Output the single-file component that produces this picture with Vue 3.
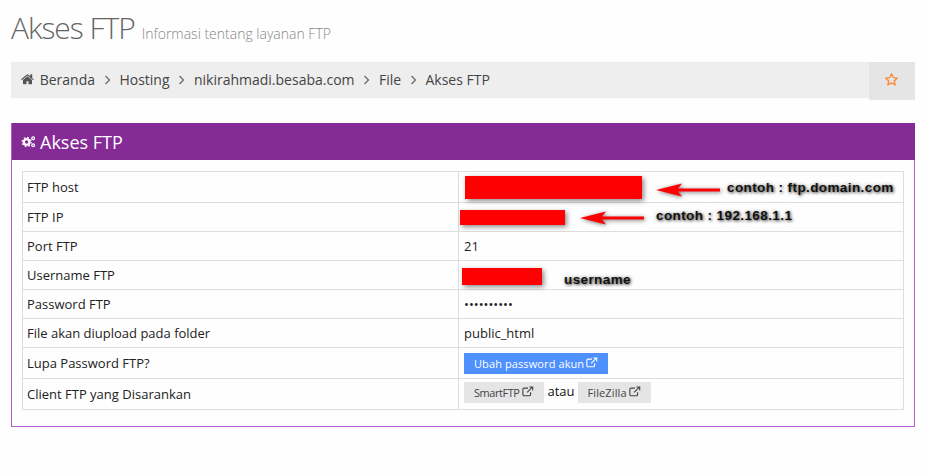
<script setup>
const rows = [
  { label: 'FTP host' },
  { label: 'FTP IP' },
  { label: 'Port FTP', value: '21' },
  { label: 'Username FTP' },
  { label: 'Password FTP', value: '••••••••••' },
  { label: 'File akan diupload pada folder', value: 'public_html' },
]
const crumbs = ['Hosting', 'nikirahmadi.besaba.com', 'File', 'Akses FTP']
</script>

<template>
  <div class="page">
    <header class="title">
      <h1>Akses FTP</h1>
      <small>Informasi tentang layanan FTP</small>
    </header>

    <div class="crumbbar">
      <nav class="crumbs">
        <svg class="home" viewBox="0 0 1664 1408" width="13" height="11"><path fill="#555" d="M1408 768v480q0 26-19 45t-45 19H960V928H704v384H320q-26 0-45-19t-19-45V768q0-1 .5-3t.5-3l575-474 575 474q1 2 1 6zm223-69-62 74q-8 9-21 11h-3q-13 0-21-7L832 200 140 777q-12 8-24 7-13-2-21-11l-62-74q-8-10-7-23.500t11-21.500L756 67q32-26 76-26t76 26l272 227V77q0-14 9-23t23-9h192q14 0 23 9t9 23v454l219 182q10 8 11 21.500t-7 23.500z"/></svg>
        <span>Beranda</span>
        <template v-for="c in crumbs" :key="c">
          <svg class="sep" viewBox="0 0 7 10" width="7" height="10"><path d="M1.500 1l4 4-4 4" fill="none" stroke="#666" stroke-width="1.200"/></svg>
          <span>{{ c }}</span>
        </template>
      </nav>
      <div class="star">
        <svg viewBox="0 0 24 24" width="15" height="15"><path d="M12 2.800l2.800 6.100 6.600.8-4.900 4.500 1.300 6.600-5.800-3.300-5.800 3.300 1.300-6.600-4.900-4.500 6.600-.8z" fill="none" stroke="#fb8a3a" stroke-width="2.200" stroke-linejoin="round"/></svg>
      </div>
    </div>

    <section class="panel">
      <div class="panel-head">
        <svg class="gears" viewBox="0 0 16 14" width="15" height="13">
          <g fill="none" stroke="#fff">
            <circle cx="6" cy="7.500" r="3" stroke-width="2.400"/>
            <circle cx="6" cy="7.500" r="4.800" stroke-width="1.500" stroke-dasharray="1.800 1.970"/>
            <circle cx="13" cy="3.500" r="1.500" stroke-width="1.300"/>
            <circle cx="13" cy="11" r="1.500" stroke-width="1.300"/>
          </g>
        </svg>
        <h2>Akses FTP</h2>
      </div>
      <div class="panel-body">
        <table>
          <tbody>
            <tr v-for="(r, i) in rows" :key="r.label" :class="{ first: i === 0 }">
              <td class="lab">{{ r.label }}</td>
              <td>{{ r.value }}</td>
            </tr>
            <tr class="btnrow">
              <td class="lab">Lupa Password FTP?</td>
              <td>
                <a class="btn blue">Ubah password akun
                  <svg viewBox="0 0 14 12" width="12" height="11"><path d="M10 7v2.500a1.500 1.500 0 0 1-1.500 1.500h-6A1.500 1.500 0 0 1 1 9.500v-6A1.500 1.500 0 0 1 2.500 2H7M6 7l6-6M8.500 .8h4v4" fill="none" stroke="currentColor" stroke-width="1.300"/></svg>
                </a>
              </td>
            </tr>
            <tr class="btnrow">
              <td class="lab">Client FTP yang Disarankan</td>
              <td class="clients">
                <a class="btn grey tight">SmartFTP
                  <svg viewBox="0 0 14 12" width="12" height="11"><path d="M10 7v2.500a1.500 1.500 0 0 1-1.500 1.500h-6A1.500 1.500 0 0 1 1 9.500v-6A1.500 1.500 0 0 1 2.500 2H7M6 7l6-6M8.500 .8h4v4" fill="none" stroke="currentColor" stroke-width="1.300"/></svg>
                </a>
                <span class="atau">atau</span>
                <a class="btn grey">FileZilla
                  <svg viewBox="0 0 14 12" width="12" height="11"><path d="M10 7v2.500a1.500 1.500 0 0 1-1.500 1.500h-6A1.500 1.500 0 0 1 1 9.500v-6A1.500 1.500 0 0 1 2.500 2H7M6 7l6-6M8.500 .8h4v4" fill="none" stroke="currentColor" stroke-width="1.300"/></svg>
                </a>
              </td>
            </tr>
          </tbody>
        </table>
      </div>
    </section>

    <!-- hand-drawn annotations pasted over the screenshot -->
    <div class="mark" style="left:465px;top:176px;width:177px;height:23px"></div>
    <div class="mark" style="left:460px;top:210px;width:105px;height:15px"></div>
    <div class="mark" style="left:462px;top:268px;width:80px;height:17px"></div>
    <svg class="arrow" style="left:654px;top:181px" width="68" height="18" viewBox="0 0 68 18"><path d="M2 9 28 2.500 24 7.500H66V10.500H24L28 15.500Z" fill="#f00"/></svg>
    <svg class="arrow" style="left:578px;top:209px" width="68" height="18" viewBox="0 0 68 18"><path d="M2 9 28 2.500 24 7.500H66V10.500H24L28 15.500Z" fill="#f00"/></svg>
    <span class="note" style="left:727px;top:180px">contoh : ftp.domain.com</span>
    <span class="note" style="left:656px;top:208px">contoh : 192.168.1.1</span>
    <span class="note" style="left:564px;top:272px">username</span>
  </div>
</template>

<style>
html, body { margin: 0; background: #fefefe; }
</style>

<style scoped>
.page {
  position: relative;
  width: 928px;
  height: 476px;
  box-sizing: border-box;
  padding: 0 13px 0 11px;
  overflow: hidden;
  font-family: "Open Sans", "Liberation Sans", sans-serif;
  color: #333;
}
.title {
  display: flex;
  align-items: baseline;
  height: 62px;
  padding-top: 7px;
  box-sizing: border-box;
}
.title h1 {
  margin: 0;
  font-size: 30px;
  line-height: 41px;
  font-weight: 300;
  color: #666;
  letter-spacing: -1.05px;
}
.title small {
  margin-left: 7px;
  font-size: 14px;
  font-weight: 300;
  color: #888;
}
.crumbbar {
  display: flex;
  align-items: flex-start;
  height: 38px;
}
.crumbs {
  flex: 1;
  height: 36px;
  display: flex;
  align-items: center;
  gap: 8.700px;
  padding-left: 10px;
  padding-bottom: 2px;
  box-sizing: border-box;
  background: #eee;
  font-size: 14px;
  color: #444;
}
.crumbs .home { margin-right: -3px; }
.crumbs .sep { margin-top: 2px; }
.star {
  width: 46px;
  height: 38px;
  padding-bottom: 3px;
  box-sizing: border-box;
  display: flex;
  align-items: center;
  justify-content: flex-start;
  padding-left: 15px;
  background: #e5e5e5;
}
.panel {
  margin-top: 23px;
  height: 304px;
  box-sizing: border-box;
  border: 1px solid #b45fc9;
}
.panel-head {
  height: 37px;
  margin: -1px -1px 0 0;
  padding-left: 9px;
  display: flex;
  align-items: center;
  gap: 4px;
  background: #842b96;
  color: #fff;
}
.panel-head h2 {
  margin: 0;
  font-size: 18px;
  font-weight: 400;
}
.panel-body { padding: 11px 10px; }
table {
  width: 882px;
  border-collapse: collapse;
  font-size: 13px;
  color: #222;
  table-layout: fixed;
}
td {
  height: 28px;
  padding: 0 5px;
  border: 1px solid #ddd;
  box-sizing: content-box;
  vertical-align: middle;
  line-height: 17px;
}
.first td { height: 30px; }
.lab { width: 426px; padding-left: 4px; }
.btnrow td { height: 30px; }
.btnrow td.lab { padding-left: 4px; }
.btn {
  display: inline-flex;
  align-items: center;
  gap: 2px;
  height: 21px;
  padding: 0 10px;
  font-size: 11px;
  letter-spacing: .1px;
  white-space: nowrap;
}
.btn svg { margin-top: -2px; }
.blue { background: #4d90fe; color: #fff; }
.grey { background: #e5e5e5; color: #444; }
.tight { letter-spacing: -.45px; }
.clients { font-size: 0; }
.atau { font-size: 13px; margin: 0 3px 0 4px; color: #111; position: relative; top: -1px; }
.mark {
  position: absolute;
  background: #f00;
  box-shadow: 2px 2px 5px rgba(0, 0, 0, .45);
}
.arrow {
  position: absolute;
  filter: drop-shadow(1px 1px 2px rgba(0, 0, 0, .55));
}
.note {
  position: absolute;
  font: bold 13.500px/16px "Liberation Sans", Arial, sans-serif;
  color: #111;
  letter-spacing: .4px;
  white-space: nowrap;
  text-shadow: 1px 1px 3px rgba(0, 0, 0, .7), 0 0 4px rgba(0, 0, 0, .25);
}
</style>
